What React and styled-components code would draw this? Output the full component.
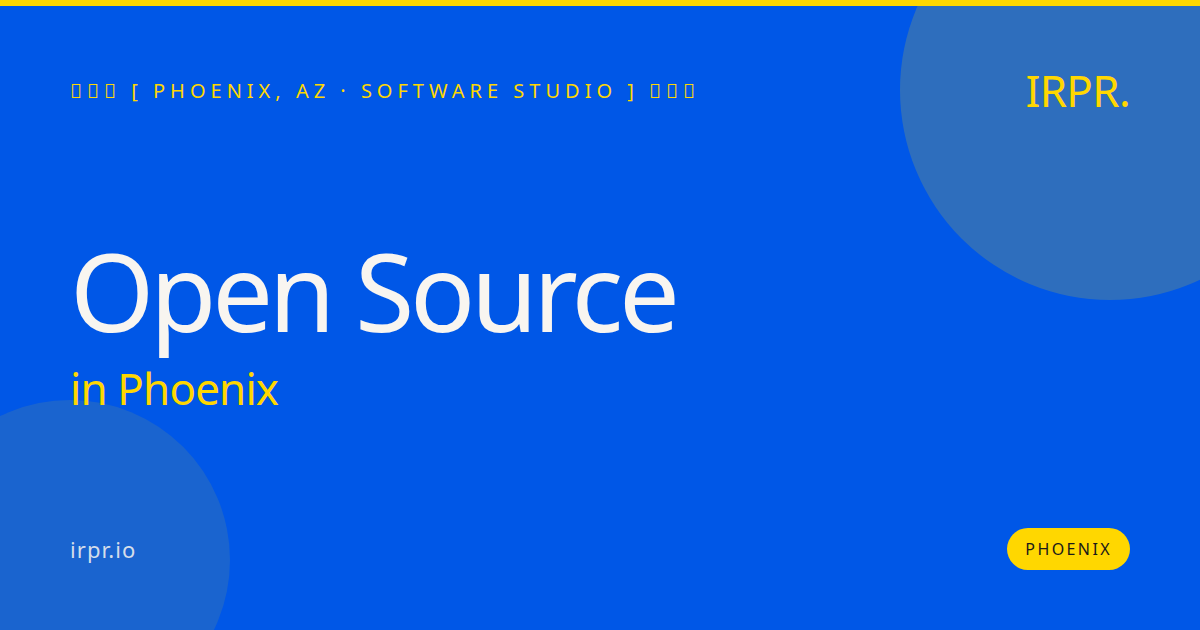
import React from "react";
import styled, { createGlobalStyle } from "styled-components";

const Global = createGlobalStyle`
  html, body {
    margin: 0;
    padding: 0;
  }
  body {
    font-family: "Noto Sans", sans-serif;
  }
`;

const Card = styled.div`
  position: relative;
  width: 1200px;
  height: 630px;
  overflow: hidden;
  box-sizing: border-box;
  background: #0057e7;
  border-top: 6px solid #ffd700;
  padding: 60px 70px 60px;
  display: flex;
  flex-direction: column;
`;

const Circle = styled.div`
  position: absolute;
  border-radius: 50%;
  background: rgba(255, 215, 0, ${(p) => p.$alpha});
  width: ${(p) => p.$size}px;
  height: ${(p) => p.$size}px;
`;

const TopCircle = styled(Circle)`
  top: -126px;
  right: -120px;
`;

const BottomCircle = styled(Circle)`
  left: -90px;
  bottom: -90px;
`;

const Header = styled.div`
  position: relative;
  display: flex;
  justify-content: space-between;
  align-items: center;
`;

const Eyebrow = styled.div`
  font-size: 20px;
  letter-spacing: 5px;
  color: #ffd700;
  white-space: pre;
  margin-top: -1px;
`;

const Logo = styled.div`
  font-size: 44px;
  line-height: 50px;
  letter-spacing: -0.7px;
  color: #ffd700;
  margin-top: -1px;
`;

const Hero = styled.div`
  position: relative;
  margin-top: 116px;
  flex: 1;
`;

const Title = styled.h1`
  margin: 0;
  font-size: 108px;
  line-height: 120px;
  font-weight: 400;
  letter-spacing: -4.32px;
  color: #f8f5f0;
`;

const Subtitle = styled.div`
  font-size: 44px;
  line-height: 60px;
  letter-spacing: -0.88px;
  color: #ffd700;
  margin-top: 7px;
`;

const Footer = styled.div`
  position: relative;
  display: flex;
  justify-content: space-between;
  align-items: center;
`;

const Site = styled.div`
  font-size: 22px;
  letter-spacing: 1.1px;
  color: rgba(248, 245, 240, 0.85);
`;

const Badge = styled.div`
  background: #ffd700;
  color: #1a1a1a;
  border-radius: 21px;
  height: 42px;
  padding: 0 18px;
  display: flex;
  align-items: center;
  font-size: 16px;
  letter-spacing: 2.4px;
`;

export default function App() {
  return (
    <Card>
      <Global />
      <TopCircle $size={420} $alpha={0.18} />
      <BottomCircle $size={320} $alpha={0.1} />
      <Header>
        <Eyebrow>{"\uE000\uE000\uE000 [ PHOENIX, AZ · SOFTWARE STUDIO ] \uE000\uE000\uE000"}</Eyebrow>
        <Logo>IRPR.</Logo>
      </Header>
      <Hero>
        <Title>Open Source</Title>
        <Subtitle>in Phoenix</Subtitle>
      </Hero>
      <Footer>
        <Site>irpr.io</Site>
        <Badge>PHOENIX</Badge>
      </Footer>
    </Card>
  );
}
